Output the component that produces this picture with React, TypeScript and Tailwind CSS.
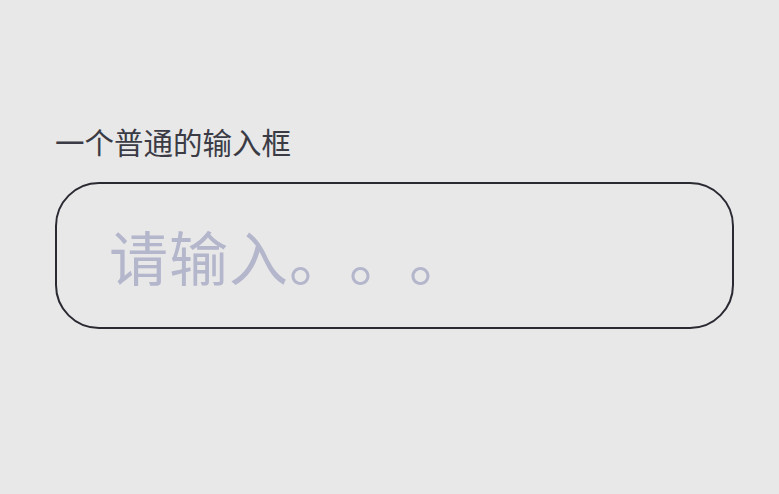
import { useState } from "react";

export default function App() {
  const [value, setValue] = useState("");

  return (
    <div
      className="w-[779px] h-[494px] bg-[#e8e8e8] pt-[125px] px-[55px]"
      style={{ fontFamily: '"Noto Sans CJK SC", "Noto Sans", sans-serif' }}
    >
      <label className="block text-[29.5px] leading-[32px] text-[#3b3b45]">
        一个普通的输入框
      </label>
      <div className="mt-[25px] w-[679px] h-[147px] rounded-[44px] border-2 border-[#2a2a33] flex items-center">
        <input
          value={value}
          onChange={(e) => setValue(e.target.value)}
          placeholder="请输入。。。"
          className="w-full h-full bg-transparent outline-none pl-[52px] pr-8 text-[59px] tracking-[1px] [text-spacing-trim:space-all] text-[#3b3b45] placeholder:text-[#b4b6cc]"
        />
      </div>
    </div>
  );
}
